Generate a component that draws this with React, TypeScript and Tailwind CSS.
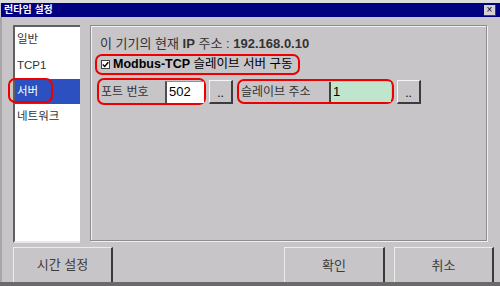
import React from "react";

const font = { fontFamily: '"Liberation Sans", "Noto Sans CJK KR", sans-serif' };

function DotButton() {
  return (
    <div className="w-[24px] h-[24px] bg-[#c8c5c8] border-t border-l border-t-[#f4f4f4] border-l-[#f4f4f4] border-r-2 border-b-2 border-r-[#3c3c3c] border-b-[#3c3c3c] flex items-end justify-center pb-[3px] text-[12px] leading-none text-black">
      ..
    </div>
  );
}

function BigButton({ label, className }: { label: string; className: string }) {
  return (
    <div
      className={
        "h-[40px] bg-[#c8c5c8] border-t border-l border-t-[#ececec] border-l-[#ececec] border-r-2 border-r-[#3a3a3a] flex items-center justify-center text-[13px] text-[#3c3c3c] pb-[4px] " +
        className
      }
    >
      {label}
    </div>
  );
}

export default function App() {
  return (
    <div className="w-[500px] h-[286px] bg-[#c8c5c8] overflow-hidden relative flex flex-col" style={font}>
      {/* top light edge */}
      <div className="h-[3px] bg-[#dcdcdc] shrink-0" />
      {/* title bar */}
      <div className="h-[14px] ml-[1px] bg-[#000080] flex items-center justify-between shrink-0">
        <span className="text-white text-[10px] font-bold pl-[3px] leading-none">런타임 설정</span>
        <div className="w-[12px] h-[11px] mr-[4px] bg-[#d4d0d4] border-r border-b border-r-[#404040] border-b-[#404040] flex items-center justify-center text-[10px] leading-none text-black">
          ×
        </div>
      </div>
      <div className="flex-1 flex border-l-2 border-l-[#a8a6a8] relative">
        <div className="flex flex-col flex-1">
          {/* main area */}
          <div className="flex pt-[8px] pl-[11px]">
            {/* list */}
            <div className="w-[67px] h-[218px] bg-white border-t-2 border-l-2 border-t-[#606060] border-l-[#606060] border-b-2 border-b-[#e8e8e8] flex flex-col text-[11.5px] text-[#333]">
              <div className="h-[26px] flex items-center pl-[2px]">일반</div>
              <div className="h-[26px] flex items-center pl-[2px]">TCP1</div>
              <div className="h-[25px] flex items-center pl-[2px] bg-[#2c50c0] text-white">서버</div>
              <div className="h-[26px] flex items-center pl-[2px]">네트워크</div>
            </div>
            {/* panel */}
            <div className="ml-[10px] w-[397px] h-[216px] border border-[#8e8c8e] shadow-[inset_1px_1px_0_#f0f0f0,1px_1px_0_#f0f0f0] flex flex-col pl-[4px] text-[12px]">
              <div className="mt-[11px] ml-[5px] h-[14px] leading-[14px] text-[13px] text-[#333]">
                이 기기의 현재 <span className="font-bold">IP</span> 주소 : <span className="font-bold">192.168.0.10</span>
              </div>
              <div className="mt-[3px] w-[205px] h-[21px] border-2 border-[#ee0000] rounded-[7px] flex items-center pl-[4px] gap-[3px]">
                <div className="w-[9px] h-[9px] bg-white border border-[#404040] flex items-center justify-center">
                  <svg width="7" height="7" viewBox="0 0 7 7">
                    <path d="M0.8 3.5 L2.7 5.4 L6.3 1.2" stroke="#000" strokeWidth="1.4" fill="none" />
                  </svg>
                </div>
                <span className="text-black text-[12.5px]">
                  <span className="font-bold">Modbus-TCP</span> 슬레이브 서버 구동
                </span>
              </div>
              <div className="mt-[3px] flex items-center">
                <div className="ml-[2px] w-[109px] h-[27px] border-2 border-[#ee0000] rounded-[7px] flex items-center pl-[2px]">
                  <span className="w-[64px] text-[#333]">포트 번호</span>
                  <div className="w-[39px] h-[22px] bg-white border-l-2 border-t border-l-[#505050] border-t-[#909090] flex items-center pl-[2px] text-black text-[13px]">
                    502
                  </div>
                </div>
                <div className="ml-[3px]">
                  <DotButton />
                </div>
                <div className="ml-[4px] w-[157px] h-[25px] border-2 border-[#ee0000] rounded-[7px] flex items-center pl-[2px]">
                  <span className="w-[88px] text-[#333]">슬레이브 주소</span>
                  <div className="w-[62px] h-[20px] bg-[#bfe5cd] border-l-2 border-l-[#404040] flex items-center pl-[2px] text-black text-[13px]">
                    1
                  </div>
                </div>
                <div className="ml-[3px]">
                  <DotButton />
                </div>
              </div>
            </div>
          </div>
          {/* bottom buttons */}
          <div className="flex mt-[4px] pl-[11px]">
            <BigButton label="시간 설정" className="w-[100px] border-b-2 border-b-[#3a3a3a] h-[37px] pb-[2px]" />
            <div className="flex-1" />
            <BigButton label="확인" className="w-[101px]" />
            <div className="w-[9px]" />
            <BigButton label="취소" className="w-[100px]" />
            <div className="w-[6px]" />
          </div>
        </div>
        {/* red annotation around selected item */}
        <div className="absolute left-[6px] top-[61px] w-[45px] h-[25px] border-2 border-[#ee0000] rounded-[7px] pointer-events-none" />
      </div>
      {/* bottom dark edge */}
      <div className="absolute left-0 bottom-0 w-full h-[4px] bg-[#6a6a6a]" />
    </div>
  );
}
